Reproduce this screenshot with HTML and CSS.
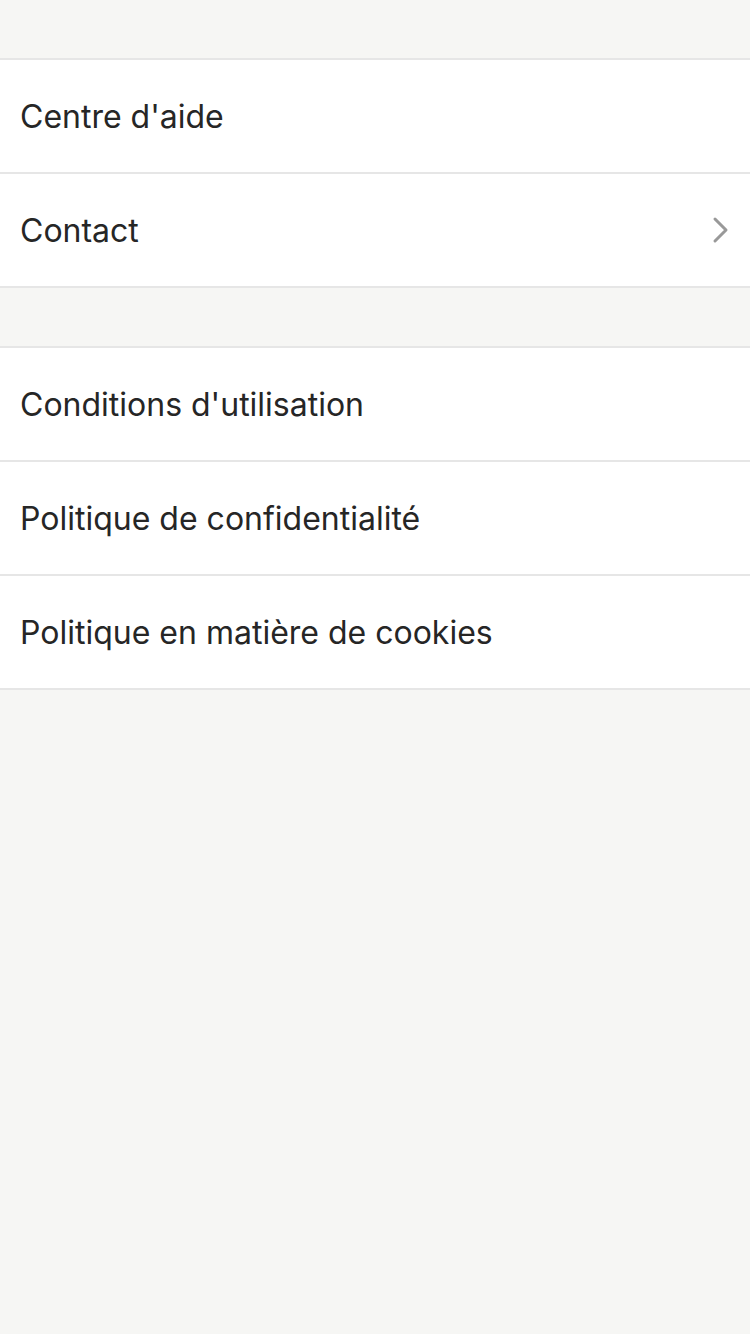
FILE: index.html
```html
<!DOCTYPE html>
<html lang="fr">
<head>
<meta charset="utf-8">
<link rel="stylesheet" href="styles.css">
</head>
<body>
<div class="page">
  <div class="group first">
    <div class="row"><span class="label">Centre d'aide</span></div>
    <div class="row"><span class="label">Contact</span>
      <svg class="chev" width="18" height="28" viewBox="0 0 18 28"><path d="M3 3 L14 14 L3 25" fill="none" stroke="#999" stroke-width="3" stroke-linecap="round" stroke-linejoin="round"/></svg>
    </div>
  </div>
  <div class="group">
    <div class="row"><span class="label">Conditions d'utilisation</span></div>
    <div class="row"><span class="label">Politique de confidentialité</span></div>
    <div class="row"><span class="label">Politique en matière de cookies</span></div>
  </div>
</div>
</body>
</html>
```

FILE: styles.css
```css
html, body {
  margin: 0;
  padding: 0;
  background: #f6f6f4;
}
.page {
  width: 750px;
  min-height: 1334px;
  padding-top: 58px;
  box-sizing: border-box;
  display: flex;
  flex-direction: column;
  gap: 58px;
}
.group {
  background: #fff;
  border-top: 2px solid #e6e6e6;
}
.row {
  height: 112px;
  border-bottom: 2px solid #e6e6e6;
  display: flex;
  align-items: center;
  justify-content: space-between;
  padding: 0 20px 0 20px;
}
.label {
  font-family: "Inter", "Liberation Sans", sans-serif;
  font-size: 32px;
  color: #262626;
  letter-spacing: 0;
}
.chev {
  display: block;
}
```
